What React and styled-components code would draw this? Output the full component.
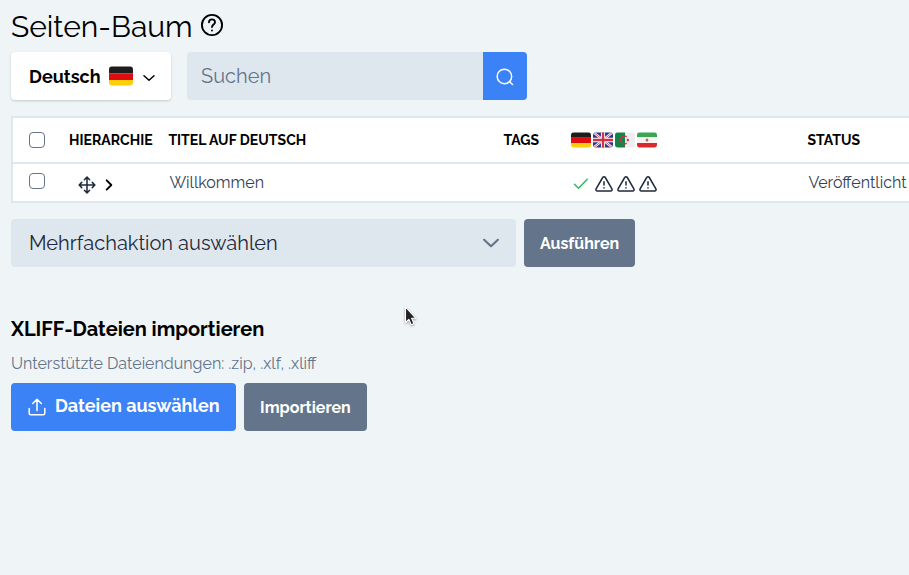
import React from "react";
import styled, { createGlobalStyle } from "styled-components";

const GlobalStyle = createGlobalStyle`
  *, *::before, *::after { box-sizing: border-box; }
  body {
    margin: 0;
    background: #eff4f7;
    color: #000;
    font: 400 16px/24px Raleway, Lato, "Open Sans", sans-serif;
    overflow: hidden;
  }
  button, input { font: inherit; }
  svg { display: block; flex: none; }
`;

const Page = styled.main`
  height: 575px;
  padding: 9px 0 0 11px;
  overflow: hidden;
`;

const TitleRow = styled.header`
  display: flex;
  gap: 7px;
  height: 43px;
  svg { margin-top: 4px; }
`;

const Title = styled.h1`
  margin: 0;
  font-size: 30px;
  font-weight: 400;
  line-height: 36px;
`;

const Toolbar = styled.div`
  display: flex;
  gap: 16px;
  height: 48px;
`;

const LanguageButton = styled.button`
  display: flex;
  align-items: center;
  width: 160px;
  padding: 2px 0 0 18px;
  border: 0;
  border-radius: 4px;
  background: #fff;
  color: #000;
  font-size: 18px;
  font-weight: 700;
  box-shadow: 0 1px 3px rgba(0, 0, 0, 0.12), 0 1px 2px rgba(0, 0, 0, 0.06);
  svg:nth-of-type(1) { margin: -2px 0 0 8px; }
  svg:nth-of-type(2) { margin: 2px 0 0 8px; }
`;

const SearchForm = styled.form`
  display: flex;
  width: 340px;
  border-radius: 4px;
  overflow: hidden;
`;

const SearchInput = styled.input`
  width: 296px;
  padding: 0 14px;
  border: 0;
  border-radius: 0;
  background: #dfe7ee;
  font-size: 20px;
  &::placeholder { color: #64748b; opacity: 1; }
`;

const SearchButton = styled.button`
  display: grid;
  place-items: center;
  width: 44px;
  padding: 2px 0 0;
  border: 0;
  background: #3b82f6;
  color: #fff;
`;

const Table = styled.section`
  width: 1100px;
  margin-top: 16px;
  border: 2px solid #dfe7ee;
  background: #fff;
`;

const Row = styled.div`
  display: grid;
  grid-template-columns: 55.6px 99.4px 335px 67px 237px 1fr;
  height: ${(p) => (p.$head ? "46px" : "37px")};
  border-bottom: ${(p) => (p.$head ? "2px solid #dfe7ee" : "0")};
  color: ${(p) => (p.$head ? "#000" : "#334155")};
  font-size: ${(p) => (p.$head ? "14px" : "16px")};
  font-weight: ${(p) => (p.$head ? 700 : 400)};
`;

const HeadCell = styled.div`
  padding: 10px 0 0 0.4px;
  letter-spacing: 0.04px;
  white-space: nowrap;
`;

const Cell = styled.div`
  padding: 7px 0 0 1.4px;
  white-space: nowrap;
`;

const CheckCell = styled.label`
  padding: ${(p) => (p.$head ? "14px" : "9px")} 0 0 16px;
`;

const Checkbox = styled.input`
  display: block;
  appearance: none;
  width: 16px;
  height: 16px;
  margin: 0;
  border: 1px solid #64748b;
  border-radius: 4px;
  background: #fff;
`;

const Flags = styled.div`
  display: flex;
  gap: 2px;
  padding: 14px 0 0 1px;
`;

const HierarchyIcons = styled.div`
  display: flex;
  align-items: center;
  gap: 5px;
  height: 20px;
  margin: 11px 0 0 9.4px;
  color: #1e293b;
`;

const StatusIcons = styled.div`
  display: flex;
  align-items: center;
  gap: 4px;
  height: 20px;
  margin: 10px 0 0 2px;
  color: #1e293b;
  svg:first-child { margin-right: 1px; }
`;

const BulkBar = styled.div`
  display: flex;
  gap: 8px;
  margin-top: 16px;
`;

const BulkSelect = styled.button`
  display: flex;
  align-items: center;
  justify-content: space-between;
  width: 505px;
  height: 48px;
  padding: 0 14px 0 18px;
  border: 0;
  border-radius: 4px;
  background: #dfe7ee;
  color: #1e293b;
  font-size: 20px;
  svg { color: #64748b; }
`;

const Button = styled.button`
  display: flex;
  align-items: center;
  gap: 8px;
  height: 48px;
  padding: ${(p) => (p.$primary ? "0 16px" : "2px 16px 0")};
  border: 0;
  border-radius: 4px;
  background: ${(p) => (p.$primary ? "#3b82f6" : "#64748b")};
  color: #fff;
  font-size: ${(p) => (p.$primary ? "18px" : "16px")};
  font-weight: 700;
  white-space: nowrap;
`;

const Label = styled.span`
  padding-bottom: 2px;
`;

const ImportHeading = styled.h2`
  margin: 48px 0 0;
  font-size: 20px;
  font-weight: 700;
  line-height: 28px;
`;

const Hint = styled.p`
  margin: 9px 0 7px;
  color: #64748b;
`;

const Actions = styled.div`
  display: flex;
  gap: 8.4px;
`;

const Pointer = styled.svg`
  position: absolute;
  left: 403px;
  top: 305px;
  filter: drop-shadow(0 1px 1px rgba(0, 0, 0, 0.35));
`;

const Icon = ({ size = 20, width = 1.5, children }) => (
  <svg width={size} height={size} viewBox="0 0 24 24" fill="none" stroke="currentColor"
    strokeWidth={width} strokeLinecap="round" strokeLinejoin="round">{children}</svg>
);

const HelpIcon = () => (
  <Icon size={24} width={1.9}>
    <circle cx="12" cy="12" r="10.1" />
    <path d="M9 9.3C9 5.4 15 5.4 15 9.2c0 2.3-3 2.2-3 4.8M12 17.500v.1" />
  </Icon>
);
const Chevron = ({ size, width }) => (
  <Icon size={size} width={width}><path d="m4.5 8.500 7.500 7 7.500-7" /></Icon>
);
const ChevronRight = () => (
  <Icon size={16} width={2.8}><path d="m8.5 5 7 7-7 7" stroke="#000" /></Icon>
);
const SearchIcon = () => (
  <Icon size={20} width={1.8}><circle cx="11.3" cy="11.3" r="8.7" /><path d="m17.6 17.6 3.4 3.4" /></Icon>
);
const MoveIcon = () => (
  <Icon size={18} width={2}>
    <path d="M12 1.5v21M1.5 12h21M8.5 5 12 1.5 15.5 5M8.5 19l3.5 3.5 3.5-3.5M5 8.5 1.5 12 5 15.5M19 8.5l3.5 3.5-3.5 3.5" />
  </Icon>
);
const CheckIcon = () => (
  <svg width="18" height="18" viewBox="0 0 18 18" fill="none" stroke="#36bb68" strokeWidth="1.6"
    strokeLinecap="round" strokeLinejoin="round"><path d="m2.5 9.3 4 4 8.8-9" /></svg>
);
const WarningIcon = () => (
  <svg width="18" height="18" viewBox="0 0 18 18" fill="none" stroke="currentColor" strokeWidth="1.5"
    strokeLinecap="round" strokeLinejoin="round">
    <path d="M7.7 2.5 1.100 13.900a1.400 1.400 0 0 0 1.200 2.100h13.400a1.400 1.400 0 0 0 1.200-2.100L10.300 2.500a1.500 1.500 0 0 0-2.600 0ZM9 6.800v3.200M9 12.800v.1" />
  </svg>
);
const UploadIcon = () => (
  <svg width="20" height="20" viewBox="0 0 20 20" fill="none" stroke="currentColor" strokeWidth="1.5"
    strokeLinecap="round" strokeLinejoin="round">
    <path d="M10 13.5V2.500M5.700 6.500 10 2.200 14.300 6.500M2.200 11.500v4.700c0 1 .6 1.600 1.600 1.600h12.400c1 0 1.600-.6 1.600-1.600v-4.700" />
  </svg>
);

const flagArt = {
  de: <><path fill="#1d1d1b" d="M0 0h24v6.5H0z" /><path fill="#dd0c10" d="M0 6.5h24v6H0z" /><path fill="#ffce0a" d="M0 12.5h24V18H0z" /></>,
  gb: <>
    <path fill="#29378d" d="M0 0h24v18H0z" />
    <path stroke="#fff" strokeWidth="2.8" d="m0 0 24 18M24 0 0 18" />
    <path stroke="#d32f45" strokeWidth="1" d="m0 0 24 18M24 0 0 18" />
    <path stroke="#fff" strokeWidth="5" d="M12 0v18M0 9h24" />
    <path stroke="#d32f45" strokeWidth="2.8" d="M12 0v18M0 9h24" />
  </>,
  dz: <>
    <path fill="#128448" d="M0 0h12v18H0z" /><path fill="#eee" d="M12 0h12v18H12z" />
    <path fill="none" stroke="#d32f45" strokeWidth="1.4" d="M14 5.6a4.400 4.400 0 1 0 0 6.800" />
    <circle cx="15.4" cy="9" r="1.4" fill="#d32f45" />
  </>,
  ir: <>
    <path fill="#3aa655" d="M0 0h24v6H0z" /><path fill="#f5f2ef" d="M0 6h24v6.5H0z" /><path fill="#d9282f" d="M0 12.5h24V18H0z" />
    <circle cx="12" cy="9.1" r="1.7" fill="#d9574f" />
  </>,
};

const Flag = ({ code, large }) => (
  <svg width={large ? 24 : 20} height={large ? 20 : 16} viewBox="0 0 24 18" preserveAspectRatio="none">
    <defs><clipPath id={"flag-" + code + (large ? "-lg" : "")}><rect x="0" y="0.5" width="24" height="17" rx="2.8" /></clipPath></defs>
    <g clipPath={`url(#flag-${code}${large ? "-lg" : ""})`}>{flagArt[code]}</g>
  </svg>
);

export default function App() {
  return (
    <>
      <GlobalStyle />
      <Page>
        <TitleRow><Title>Seiten-Baum</Title><HelpIcon /></TitleRow>
        <Toolbar>
          <LanguageButton>Deutsch<Flag code="de" large /><Chevron size={16} width={2.2} /></LanguageButton>
          <SearchForm>
            <SearchInput placeholder="Suchen" />
            <SearchButton type="button" aria-label="Suchen"><SearchIcon /></SearchButton>
          </SearchForm>
        </Toolbar>
        <Table>
          <Row $head>
            <CheckCell $head><Checkbox type="checkbox" /></CheckCell>
            <HeadCell>HIERARCHIE</HeadCell>
            <HeadCell>TITEL AUF DEUTSCH</HeadCell>
            <HeadCell>TAGS</HeadCell>
            <Flags>{["de", "gb", "dz", "ir"].map((c) => <Flag key={c} code={c} />)}</Flags>
            <HeadCell>STATUS</HeadCell>
          </Row>
          <Row>
            <CheckCell><Checkbox type="checkbox" /></CheckCell>
            <HierarchyIcons><MoveIcon /><ChevronRight /></HierarchyIcons>
            <Cell>Willkommen</Cell>
            <Cell />
            <StatusIcons><CheckIcon /><WarningIcon /><WarningIcon /><WarningIcon /></StatusIcons>
            <Cell>Veröffentlicht</Cell>
          </Row>
        </Table>
        <BulkBar>
          <BulkSelect>Mehrfachaktion auswählen<Chevron size={22} width={2.4} /></BulkSelect>
          <Button>Ausführen</Button>
        </BulkBar>
        <ImportHeading>XLIFF-Dateien importieren</ImportHeading>
        <Hint>Unterstützte Dateiendungen: .zip, .xlf, .xliff</Hint>
        <Actions>
          <Button $primary><UploadIcon /><Label>Dateien auswählen</Label></Button>
          <Button>Importieren</Button>
        </Actions>
        <Pointer width="14" height="22" viewBox="0 0 14 22" aria-hidden="true">
          <path d="M2.5 2v15.5l3.3-3.2 2.4 5.4 2.7-1.2-2.3-5.2h4.3z" fill="#222" stroke="#fff" strokeWidth="1.1" strokeLinejoin="round" />
        </Pointer>
      </Page>
    </>
  );
}
